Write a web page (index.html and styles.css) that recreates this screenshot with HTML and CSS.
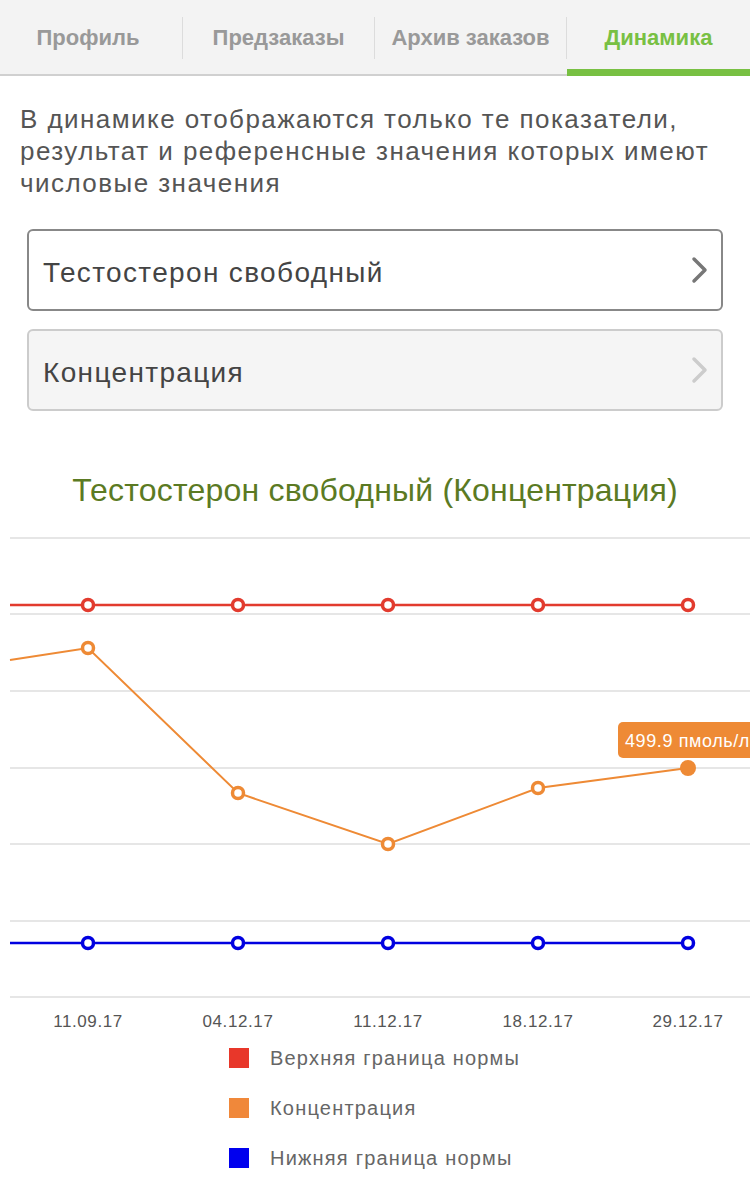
FILE: index.html
```html
<!DOCTYPE html>
<html lang="ru">
<head>
    <meta charset="UTF-8">
    <meta name="viewport" content="width=device-width, initial-scale=1.0">
    <title>Динамика</title>
    <link rel="stylesheet" href="styles.css">
</head>
<body>
    <!-- Вкладки -->
    <nav class="tabs">
        <div class="tab tab-profile">Профиль</div>
        <span class="tab-sep"></span>
        <div class="tab tab-pre">Предзаказы</div>
        <span class="tab-sep"></span>
        <div class="tab tab-archive">Архив заказов</div>
        <span class="tab-sep"></span>
        <div class="tab tab-dyn active">Динамика</div>
    </nav>

    <p class="note">В динамике отображаются только те показатели, результат и референсные значения которых имеют числовые значения</p>

    <div class="select">
        <span>Тестостерон свободный</span>
        <svg class="chevron" width="18" height="28" viewBox="0 0 18 28"><path d="M3 3 L14 14 L3 25" fill="none" stroke="#777" stroke-width="3.5" stroke-linecap="round" stroke-linejoin="round"/></svg>
    </div>
    <div class="select disabled">
        <span>Концентрация</span>
        <svg class="chevron" width="18" height="28" viewBox="0 0 18 28"><path d="M3 3 L14 14 L3 25" fill="none" stroke="#ccc" stroke-width="3.5" stroke-linecap="round" stroke-linejoin="round"/></svg>
    </div>

    <h2 class="chart-title">Тестостерон свободный (Концентрация)</h2>

    <!-- График -->
    <svg class="chart" width="750" height="512" viewBox="0 0 750 512">
        <g stroke="#e6e6e6" stroke-width="2">
            <line x1="10" y1="17" x2="750" y2="17"/>
            <line x1="10" y1="93" x2="750" y2="93"/>
            <line x1="10" y1="170" x2="750" y2="170"/>
            <line x1="10" y1="247" x2="750" y2="247"/>
            <line x1="10" y1="323" x2="750" y2="323"/>
            <line x1="10" y1="400" x2="750" y2="400"/>
            <line x1="10" y1="476" x2="750" y2="476"/>
        </g>

        <!-- верхняя граница -->
        <line x1="10" y1="84" x2="688" y2="84" stroke="#e23b2e" stroke-width="2.5"/>
        <g fill="#fff" stroke="#e23b2e" stroke-width="3.5">
            <circle cx="88" cy="84" r="5.5"/>
            <circle cx="238" cy="84" r="5.5"/>
            <circle cx="388" cy="84" r="5.5"/>
            <circle cx="538" cy="84" r="5.5"/>
            <circle cx="688" cy="84" r="5.5"/>
        </g>

        <!-- концентрация -->
        <polyline points="10,139 88,127 238,272 388,323 538,267 688,247" fill="none" stroke="#ee8a35" stroke-width="2"/>
        <g fill="#fff" stroke="#ee8a35" stroke-width="3.5">
            <circle cx="88" cy="127" r="5.5"/>
            <circle cx="238" cy="272" r="5.5"/>
            <circle cx="388" cy="323" r="5.5"/>
            <circle cx="538" cy="267" r="5.5"/>
        </g>
        <circle cx="688" cy="247" r="8" fill="#ee8a35"/>
        <rect x="618" y="201" width="150" height="36" rx="5" fill="#ee8a35"/>
        <text x="625" y="226" class="tip">499.9 пмоль/л</text>

        <!-- нижняя граница -->
        <line x1="10" y1="422" x2="688" y2="422" stroke="#0000e0" stroke-width="2.5"/>
        <g fill="#fff" stroke="#0000e0" stroke-width="3.5">
            <circle cx="88" cy="422" r="5.5"/>
            <circle cx="238" cy="422" r="5.5"/>
            <circle cx="388" cy="422" r="5.5"/>
            <circle cx="538" cy="422" r="5.5"/>
            <circle cx="688" cy="422" r="5.5"/>
        </g>

        <g class="axis">
            <text x="88" y="506">11.09.17</text>
            <text x="238" y="506">04.12.17</text>
            <text x="388" y="506">11.12.17</text>
            <text x="538" y="506">18.12.17</text>
            <text x="688" y="506">29.12.17</text>
        </g>
    </svg>

    <ul class="legend">
        <li><span class="swatch red"></span>Верхняя граница нормы</li>
        <li><span class="swatch orange"></span>Концентрация</li>
        <li><span class="swatch blue"></span>Нижняя граница нормы</li>
    </ul>
</body>
</html>
```

FILE: styles.css
```css
* {
    margin: 0;
    padding: 0;
    box-sizing: border-box;
}

body {
    font-family: "Liberation Sans", Arial, sans-serif;
    background: #fff;
    width: 750px;
    overflow-x: hidden;
}

/* Вкладки */
.tabs {
    display: flex;
    height: 76px;
    background: #f3f3f3;
    border-bottom: 2px solid #d0d0d0;
}

.tab {
    display: flex;
    align-items: center;
    justify-content: center;
    font-size: 22px;
    font-weight: bold;
    color: #999;
    padding-top: 2px;
}

.tab-profile { width: 182px; padding-right: 6px; }
.tab-pre { width: 191px; }
.tab-archive { width: 191px; }
.tab-dyn { flex: 1; }

.tab.active {
    color: #78c043;
    border-bottom: 7px solid #78c043;
    margin-bottom: -2px;
    padding-top: 7px;
}

.tab-sep {
    width: 1px;
    height: 42px;
    align-self: center;
    margin-top: 2px;
    background: #dcdcdc;
}

/* Текст */
.note {
    padding: 27px 20px 0;
    font-size: 26px;
    line-height: 32px;
    letter-spacing: 1.45px;
    color: #555;
}

.select {
    display: flex;
    align-items: center;
    justify-content: space-between;
    margin: 30px 27px 0;
    height: 82px;
    padding: 5px 12px 0 14px;
    border: 2px solid #888;
    border-radius: 6px;
    background: #fff;
    font-size: 28px;
    letter-spacing: 1.35px;
    color: #444;
}

.select .chevron {
    margin-top: -5px;
}

.select + .select {
    margin-top: 18px;
}

.select.disabled {
    background: #f5f5f5;
    border-color: #ccc;
}

.chart-title {
    margin-top: 60px;
    text-align: center;
    font-size: 32px;
    line-height: 38px;
    letter-spacing: 0.2px;
    font-weight: normal;
    color: #5b7a23;
}

.chart {
    display: block;
    margin-top: 12px;
}

.tip {
    font-size: 18px;
    letter-spacing: 0.6px;
    fill: #fff;
}

.axis text {
    font-size: 17px;
    letter-spacing: 0.6px;
    fill: #555;
    text-anchor: middle;
}

/* Легенда */
.legend {
    list-style: none;
    padding-left: 229px;
}

.legend li {
    display: flex;
    align-items: center;
    height: 50px;
    font-size: 20px;
    letter-spacing: 1.2px;
    color: #666;
}

.swatch {
    width: 20px;
    height: 20px;
    margin-right: 21px;
}

.swatch.red { background: #e8372a; }
.swatch.orange { background: #f0883a; }
.swatch.blue { background: #0000ee; }
```
